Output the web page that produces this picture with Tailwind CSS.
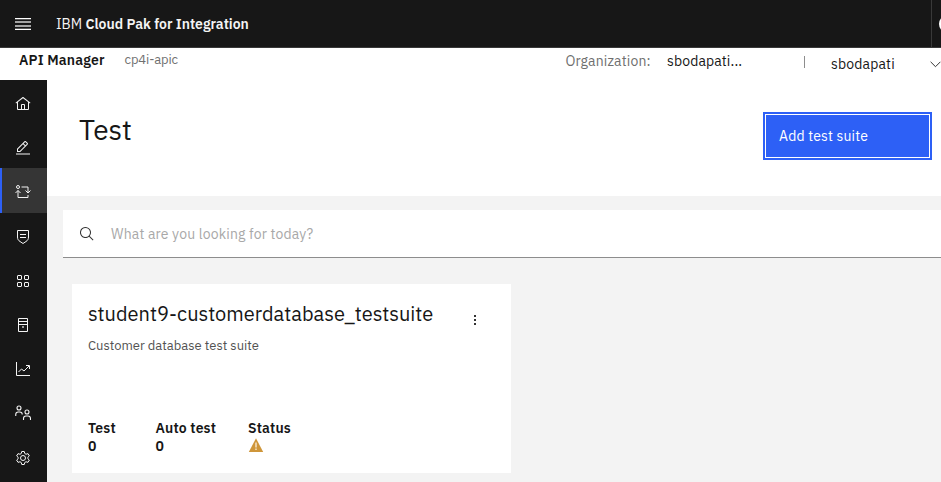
<!DOCTYPE html>
<html lang="en">
<head>
<meta charset="utf-8">
<title>API Manager - Test</title>
<script src="https://cdn.jsdelivr.net/npm/@tailwindcss/browser@4"></script>
</head>
<body class="w-[941px] h-[482px] overflow-hidden flex flex-col bg-[#f3f3f3] text-[#161616] font-['IBM_Plex_Sans',Roboto,'Liberation_Sans',sans-serif] whitespace-nowrap">
<header class="h-12 shrink-0 flex items-center bg-[#171717] border-b border-[#393939] pl-[15px] text-[#f4f4f4] text-sm overflow-hidden">
  <svg class="w-4 h-3 mt-px shrink-0" viewBox="0 0 16 12"><path d="M0 0h16v1H0zM0 11h16v1H0z" fill="#fff"/><path d="M0 3h16v2H0zM0 7h16v2H0z" fill="#a4a4a4"/><path d="M0 1h16v1H0zM0 10h16v1H0z" fill="#555"/></svg>
  <span class="ml-[25px] w-[29.500px]">IBM</span>
  <span class="font-semibold">Cloud Pak for Integration</span>
  <div class="ml-auto w-[10px] h-full border-l border-[#393939] flex items-center shrink-0 pl-[7px] pt-px"><span class="size-[18px] rounded-full bg-white shrink-0"></span></div>
</header>
<div class="h-8 shrink-0 bg-white flex pl-[19px] text-sm leading-6">
  <span class="w-[105.500px] font-semibold tracking-[0.16px]">API Manager</span>
  <span class="w-[441px] text-[13px] leading-6 text-[#6f6f6f] tracking-[-0.12px]">cp4i-apic</span>
  <span class="w-[101.500px] pt-px text-[#6f6f6f] tracking-[0.16px]">Organization:</span>
  <span class="w-[137px] pt-px tracking-[0.12px]">sbodapati...</span>
  <span class="w-px h-[12px] mt-[8px] bg-[#8d8d8d]"></span>
  <span class="ml-[26px] w-[98.500px] pt-1 tracking-[0.16px]">sbodapati</span>
  <svg class="w-[11px] h-[7px] mt-[13px] shrink-0" viewBox="0 0 11 7" fill="none" stroke="#333"><path d="M.6 .8 5.5 5.7 10.4 .8"/></svg>
</div>
<div class="flex flex-1 min-h-0">
  <nav class="w-[47px] shrink-0 bg-[#171717] flex flex-col text-[#f4f4f4]">
    <a class="h-[44.3px] shrink-0 flex items-center pl-[15px] pt-[3px]"><svg class="size-4" viewBox="0 0 32 32" fill="currentColor"><path d="M16.61 2.21a1 1 0 0 0-1.24 0L1 13.42 2.24 15 4 13.62V26a2 2 0 0 0 2 2h20a2 2 0 0 0 2-2V13.63L29.76 15 31 13.43ZM18 26h-4v-8h4Zm2 0v-8a2 2 0 0 0-2-2h-4a2 2 0 0 0-2 2v8H6V12.06l10-7.79 10 7.8V26Z"/></svg></a>
    <a class="h-[44.3px] shrink-0 flex items-center pl-[15px] pt-[3px]"><svg class="size-4" viewBox="0 0 32 32" fill="currentColor"><path d="M2 27h28v2H2zM25.4 9c.8-.8.8-2 0-2.8l-3.6-3.6c-.8-.8-2-.8-2.8 0l-15 15V24h6.4zm-5-5L24 7.6l-3 3L17.4 7zM6 22v-3.6l10-10 3.6 3.6-10 10z"/></svg></a>
    <a class="-mt-[0.600px] h-[44.900px] shrink-0 flex items-center pl-[13px] pt-[3px] bg-[#353535] border-l-2 border-[#2d60f6]"><svg class="size-4" viewBox="0 0 32 32" fill="none" stroke="currentColor" stroke-width="2"><circle cx="6" cy="6" r="3"/><path d="M13 6h13v11M21 13l5 5 5-5M6 13v14h20v-5M1 18l5-5 5 5"/></svg></a>
    <a class="h-[44.3px] shrink-0 flex items-center pl-[15px] pt-[3px]"><svg class="size-4" viewBox="0 0 32 32" fill="none" stroke="currentColor" stroke-width="2"><path d="M5 3h22v13c0 5-2 7-5 9l-6 4-6-4c-3-2-5-4-5-9ZM10 11h12M10 17h12"/></svg></a>
    <a class="h-[44.3px] shrink-0 flex items-center pl-[15px] pt-[3px]"><svg class="size-4" viewBox="0 0 32 32" fill="none" stroke="currentColor" stroke-width="2"><rect x="5" y="5" width="8" height="8" rx="1"/><rect x="19" y="5" width="8" height="8" rx="1"/><rect x="5" y="19" width="8" height="8" rx="1"/><rect x="19" y="19" width="8" height="8" rx="1"/></svg></a>
    <a class="h-[44.3px] shrink-0 flex items-center pl-[15px] pt-[3px]"><svg class="size-4" viewBox="0 0 32 32" fill="none" stroke="currentColor" stroke-width="2"><path d="M7 3h18v26H7ZM7 9h18M7 15h18"/><path d="M14 18h4v4h-4z" fill="#999" stroke="none"/></svg></a>
    <a class="h-[44.3px] shrink-0 flex items-center pl-[15px] pt-[3px]"><svg class="size-4" viewBox="0 0 32 32" fill="none" stroke="currentColor" stroke-width="2"><path d="M3 2v27h27M7 22l6-6 5 4 10-10M22 9h7v7"/></svg></a>
    <a class="h-[44.3px] shrink-0 flex items-center pl-[15px] pt-px"><svg class="size-4" viewBox="0 0 32 32" fill="none" stroke="currentColor" stroke-width="2.2"><circle cx="8" cy="6" r="4"/><path d="M1.500 22v-3c0-3 2-5 5-5h3c3 0 5 2 5 5"/><circle cx="24" cy="14" r="4"/><path d="M17 30v-3c0-3 2-5 5-5h4c3 0 5 2 5 5v3"/></svg></a>
    <a class="h-[44.3px] shrink-0 flex items-center pl-[15px] pt-[3px]"><svg class="size-4" viewBox="0 0 32 32" fill="none" stroke="currentColor" stroke-width="2"><circle cx="16" cy="16" r="5"/><path d="m13.500 3h5l1 4 2.500 1.500 4-1.200 2.700 4.500-3 2.800v2.800l3 2.800-2.700 4.500-4-1.200-2.500 1.500-1 4h-5l-1-4-2.500-1.500-4 1.200-2.700-4.500 3-2.800v-2.800l-3-2.800 2.700-4.500 4 1.200 2.500-1.500Z"/></svg></a>
  </nav>
  <main class="flex-1 min-w-0 flex flex-col">
    <section class="h-[116px] shrink-0 bg-white flex justify-between items-start pl-8 pr-[9px] pt-8">
      <h1 class="text-[28px] leading-9">Test</h1>
      <button class="w-[169px] h-12 bg-[#2d60f6] p-0.5"><span class="flex items-center w-full h-full border border-white pl-[13px] text-sm text-white tracking-[0.16px]">Add test suite</span></button>
    </section>
    <div class="mt-[14px] ml-4 h-12 shrink-0 bg-white border-b border-[#8d8d8d] flex items-center pl-4">
      <svg class="size-4 mt-px" viewBox="0 0 32 32" fill="#333"><path d="m29 27.586-7.552-7.552a11.018 11.018 0 1 0-1.414 1.414L27.586 29ZM4 13a9 9 0 1 1 9 9 9.010 9.010 0 0 1-9-9Z"/></svg>
      <span class="ml-4 text-sm text-[#a8a8a8] tracking-[0.16px]">What are you looking for today?</span>
    </div>
    <article class="mt-[26px] ml-[25px] w-[439px] h-[189px] shrink-0 bg-white pl-4 pt-4 pr-[35px] flex flex-col">
      <div class="flex justify-between items-start">
        <h2 class="text-xl leading-7">student9-customerdatabase_testsuite</h2>
        <div class="mt-[15px] h-[10px] flex flex-col justify-between"><i class="size-0.5 bg-[#333]"></i><i class="size-0.5 bg-[#333]"></i><i class="size-0.5 bg-[#333]"></i></div>
      </div>
      <p class="mt-[9px] text-[13px] leading-[18px] text-[#525252]">Customer database test suite</p>
      <div class="mt-16 flex text-sm leading-[18px] font-semibold">
        <div class="w-[67.500px]"><div class="tracking-[0.16px]">Test</div><div>0</div></div>
        <div class="w-[92.500px]"><div class="tracking-[0.16px]">Auto test</div><div>0</div></div>
        <div><div class="tracking-[0.16px]">Status</div>
          <svg class="w-4 h-[14px] mt-px" viewBox="0 0 16 14"><path d="M8 .3 15.200 14H.8Z" fill="#cf963a"/><path d="M7.200 4.500h1.600v5H7.200zM7.200 10.500h1.600v1.500H7.200z" fill="#f3dfbd"/></svg></div>
      </div>
    </article>
  </main>
</div>
</body>
</html>
